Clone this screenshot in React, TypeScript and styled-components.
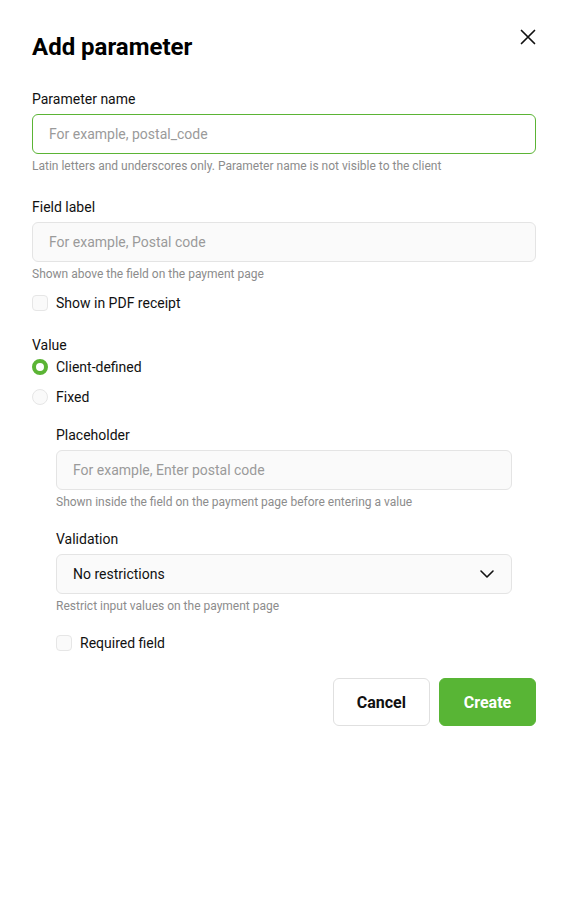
import styled, { createGlobalStyle } from "styled-components";

const GlobalStyle = createGlobalStyle`
  body {
    margin: 0;
    background: #ffffff;
    font-family: Roboto, "Liberation Sans", Arial, sans-serif;
    color: #111111;
  }
  * { box-sizing: border-box; }
`;

const Modal = styled.div`
  width: 568px;
  padding: 30px 32px 40px;
  display: flex;
  flex-direction: column;
`;

const Header = styled.div`
  display: flex;
  justify-content: space-between;
  align-items: flex-start;
  margin-bottom: 25px;
`;

const Title = styled.h1`
  margin: 0;
  font-size: 24px;
  line-height: 34px;
  font-weight: 700;
  color: #000;
`;

const CloseButton = styled.button`
  border: none;
  background: none;
  padding: 0;
  margin: -4px -3px 0 0;
  width: 22px;
  height: 22px;
  display: flex;
  align-items: center;
  justify-content: center;
  cursor: pointer;
`;

const Field = styled.div<{ $gap?: number }>`
  display: flex;
  flex-direction: column;
  margin-bottom: ${(p) => p.$gap ?? 23}px;
`;

const Label = styled.label<{ $mb?: number }>`
  font-size: 14px;
  line-height: 20px;
  margin-bottom: ${(p) => p.$mb ?? 5}px;
`;

const Input = styled.input<{ $active?: boolean }>`
  height: 40px;
  width: 100%;
  border: 1px solid ${(p) => (p.$active ? "#5bb435" : "#e4e4e4")};
  background: ${(p) => (p.$active ? "#ffffff" : "#fafafa")};
  border-radius: 6px;
  padding: 0 16px;
  font-family: inherit;
  font-size: 14px;
  color: #111;
  outline: none;
  &::placeholder {
    color: #9a9a9a;
  }
`;

const Hint = styled.div`
  font-size: 12px;
  line-height: 16px;
  color: #8c8c8c;
  margin-top: 4px;
`;

const CheckRow = styled.label<{ $mt?: number }>`
  display: flex;
  align-items: center;
  gap: 8px;
  font-size: 14px;
  line-height: 20px;
  margin-top: ${(p) => p.$mt ?? 0}px;
`;

const Box = styled.span`
  width: 16px;
  height: 16px;
  border-radius: 4px;
  border: 1px solid #e6e6e6;
  background: #fafafa;
  flex-shrink: 0;
`;

const Radio = styled.span<{ $checked?: boolean }>`
  width: 16px;
  height: 16px;
  border-radius: 50%;
  flex-shrink: 0;
  border: ${(p) => (p.$checked ? "4px solid #5bb435" : "1px solid #e6e6e6")};
  background: ${(p) => (p.$checked ? "#ffffff" : "#fafafa")};
`;

const RadioGroup = styled.div`
  display: flex;
  flex-direction: column;
  gap: 10px;
`;

const Nested = styled.div`
  display: flex;
  flex-direction: column;
  padding: 0 24px;
  margin-top: 18px;
`;

const Select = styled.div`
  height: 40px;
  border: 1px solid #e4e4e4;
  background: #fafafa;
  border-radius: 6px;
  padding: 0 16px;
  display: flex;
  align-items: center;
  justify-content: space-between;
  font-size: 14px;
`;

const Footer = styled.div`
  display: flex;
  justify-content: flex-end;
  gap: 9px;
  margin-top: 25px;
`;

const Button = styled.button<{ $primary?: boolean }>`
  height: 48px;
  padding: 0 23px;
  border-radius: 6px;
  font-family: inherit;
  font-size: 16px;
  font-weight: 700;
  cursor: pointer;
  border: 1px solid ${(p) => (p.$primary ? "#58b535" : "#e0e0e0")};
  background: ${(p) => (p.$primary ? "#58b535" : "#ffffff")};
  color: ${(p) => (p.$primary ? "#ffffff" : "#111111")};
  min-width: 97px;
`;

export default function App() {
  return (
    <>
      <GlobalStyle />
      <Modal>
        <Header>
          <Title>Add parameter</Title>
          <CloseButton aria-label="Close">
            <svg width="16" height="16" viewBox="0 0 16 16" fill="none">
              <path d="M1.5 1.5L14.5 14.5M14.5 1.5L1.5 14.5" stroke="#111" strokeWidth="1.7" strokeLinecap="round" />
            </svg>
          </CloseButton>
        </Header>

        <Field>
          <Label>Parameter name</Label>
          <Input $active placeholder="For example, postal_code" />
          <Hint>Latin letters and underscores only. Parameter name is not visible to the client</Hint>
        </Field>

        <Field $gap={22}>
          <Label>Field label</Label>
          <Input placeholder="For example, Postal code" />
          <Hint>Shown above the field on the payment page</Hint>
          <CheckRow $mt={11}>
            <Box />
            Show in PDF receipt
          </CheckRow>
        </Field>

        <Field $gap={0}>
          <Label $mb={2}>Value</Label>
          <RadioGroup>
            <CheckRow>
              <Radio $checked />
              Client-defined
            </CheckRow>
            <CheckRow>
              <Radio />
              Fixed
            </CheckRow>
          </RadioGroup>
        </Field>

        <Nested>
          <Field $gap={19}>
            <Label>Placeholder</Label>
            <Input placeholder="For example, Enter postal code" />
            <Hint>Shown inside the field on the payment page before entering a value</Hint>
          </Field>
          <Field $gap={0}>
            <Label>Validation</Label>
            <Select>
              No restrictions
              <svg width="16" height="16" viewBox="0 0 16 16" fill="none">
                <path d="M2 5L8 11L14 5" stroke="#111" strokeWidth="1.6" strokeLinecap="round" strokeLinejoin="round" />
              </svg>
            </Select>
            <Hint>Restrict input values on the payment page</Hint>
            <CheckRow $mt={19}>
              <Box />
              Required field
            </CheckRow>
          </Field>
        </Nested>

        <Footer>
          <Button>Cancel</Button>
          <Button $primary>Create</Button>
        </Footer>
      </Modal>
    </>
  );
}
